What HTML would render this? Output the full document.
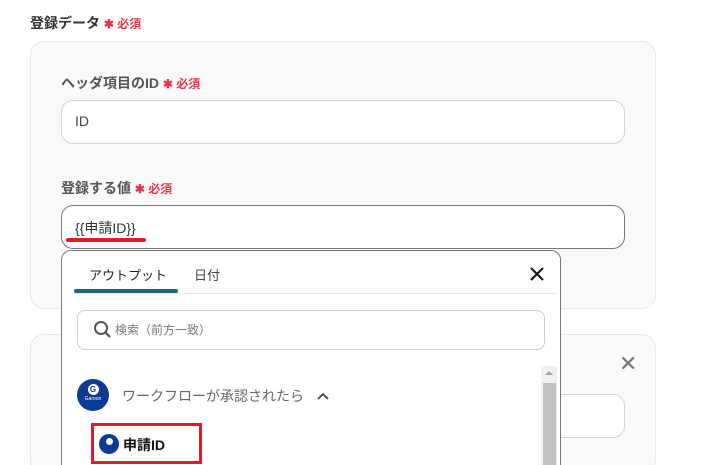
<!DOCTYPE html>
<html><head><meta charset="utf-8"><style>
*{box-sizing:border-box;margin:0;padding:0}
html,body{width:706px;height:465px;overflow:hidden}
body{background:#fff;font-family:"Liberation Sans","Noto Sans CJK JP",sans-serif;position:relative}
.a{position:absolute}
.req{color:#e8334a;font-size:12px;font-weight:bold}
.lbl{font-size:14px;font-weight:bold;color:#555}
.card{border:1px solid #e8e8e8;background:#f9f9f9;border-radius:14px}
.inp{background:#fff;border:1px solid #d0d5dd;border-radius:12px}
.logo{border-radius:50%;background:#0d3a96;color:#fff;text-align:center}
</style></head><body>
<div class="a" style="left:0;top:0;width:706px;height:465px;overflow:hidden">
<div class="a" style="left:30px;top:13px;font-size:14px;color:#333;font-weight:bold">登録データ <span class="req">✱ 必須</span></div>
<div class="a card" style="left:30px;top:41px;width:626px;height:268px"></div>
<div class="a lbl" style="left:61px;top:73px">ヘッダ項目のID <span class="req">✱ 必須</span></div>
<div class="a inp" style="left:61px;top:100px;width:564px;height:44px"></div>
<div class="a" style="left:75px;top:113px;font-size:14px;color:#444">ID</div>
<div class="a lbl" style="left:61px;top:178px">登録する値 <span class="req">✱ 必須</span></div>
<div class="a inp" style="left:61px;top:205px;width:564px;height:44px;border-color:#777"></div>
<div class="a" style="left:75px;top:218px;font-size:14px;color:#333">{{申請ID}}</div>
<div class="a" style="left:66px;top:238px;width:80px;height:4px;background:#e41a2c;border-radius:2px"></div>
<div class="a card" style="left:30px;top:334px;width:626px;height:140px"></div>
<div class="a" style="left:619px;top:354px;font-size:22px;color:#777;line-height:20px">✕</div>
<div class="a inp" style="left:500px;top:394px;width:125px;height:44px"></div>
<div class="a" style="left:61px;top:250px;width:500px;height:230px;background:#fff;border:1px solid #777;border-radius:10px"></div>
<div class="a" style="left:89px;top:265px;font-size:13px;color:#222">アウトプット</div>
<div class="a" style="left:194px;top:265px;font-size:13px;color:#444">日付</div>
<div class="a" style="left:74px;top:293px;width:483px;height:1px;background:#e4e4e4"></div>
<div class="a" style="left:74px;top:289px;width:104px;height:4px;background:#1e6579;border-radius:2px"></div>
<svg class="a" style="left:529px;top:266px" width="16" height="16"><path d="M2 2L14 14M14 2L2 14" stroke="#111" stroke-width="2"/></svg>
<div class="a" style="left:77px;top:310px;width:468px;height:40px;border:1px solid #ccc;border-radius:8px"></div>
<svg class="a" style="left:93px;top:320px" width="20" height="20"><circle cx="8" cy="8" r="6" fill="none" stroke="#555" stroke-width="2"/><path d="M12.5 12.5L17 17" stroke="#555" stroke-width="2.2"/></svg>
<div class="a" style="left:115px;top:321px;font-size:12px;color:#777">検索（前方一致）</div>
<div class="a" style="left:541px;top:366px;width:16px;height:100px;background:#f1f1f1"></div>
<div class="a" style="left:543px;top:383px;width:13px;height:90px;background:#c1c1c1"></div>
<div class="a" style="left:545px;top:371px;width:0;height:0;border-left:4px solid transparent;border-right:4px solid transparent;border-bottom:4px solid #a0a0a0"></div>
<div class="a logo" style="left:77px;top:379px;width:32px;height:32px">
<div style="width:11px;height:11px;border-radius:50%;background:#fff;color:#0d3a96;font-size:8px;line-height:11px;margin:5px auto 1px;font-weight:bold">G</div>
<div style="font-size:5px;line-height:6px">Garoon</div></div>
<div class="a" style="left:122px;top:386px;font-size:14px;color:#666">ワークフローが承認されたら</div>
<svg class="a" style="left:316px;top:391px" width="14" height="10"><path d="M2 8L7 3L12 8" fill="none" stroke="#555" stroke-width="2"/></svg>
<div class="a" style="left:91px;top:423px;width:111px;height:41px;border:3px solid #e41a2c"></div>
<div class="a logo" style="left:99px;top:434px;width:20px;height:20px">
<div style="width:7px;height:7px;border-radius:50%;background:#fff;margin:4px auto 0"></div></div>
<div class="a" style="left:123px;top:435px;font-size:14px;font-weight:bold;color:#111">申請ID</div>
</div>
</body></html>
